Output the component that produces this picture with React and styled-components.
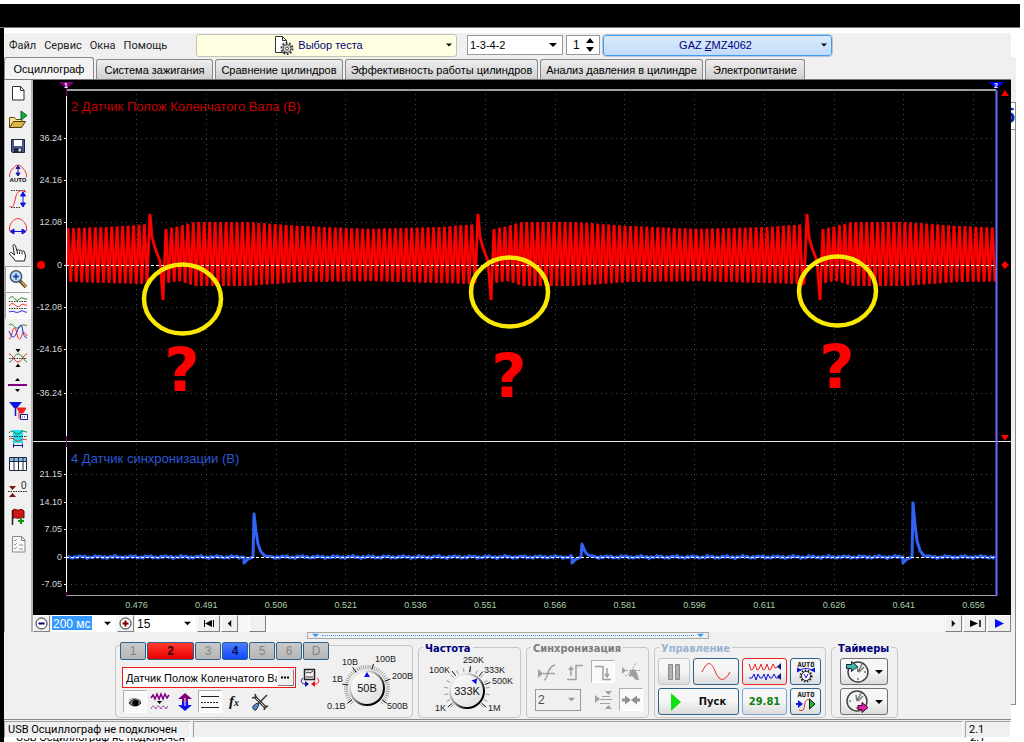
import React from "react";
import styled, { createGlobalStyle, css } from "styled-components";

const GlobalStyle = createGlobalStyle`
  * {
    box-sizing: border-box;
  }
  body {
    margin: 0;
    background: #fff;
    color: #000;
    font-family: "Liberation Sans", Arial, sans-serif;
    font-size: 11px;
  }
  button, input, select {
    font-family: inherit;
    font-size: inherit;
    color: inherit;
    margin: 0;
    padding: 0;
  }
  svg {
    display: block;
    flex: none;
  }
`;

const frame = `Roboto, "Liberation Sans", sans-serif`;
const heavy = `"DejaVu Sans Condensed", "DejaVu Sans", sans-serif`;

/* window frame */

const Page = styled.div`
  min-height: 100vh;
  display: flex;
  flex-direction: column;
  padding-top: 4px;
`;
const TitleBar = styled.header`
  height: 24px;
  margin-right: 4px;
  background: #000;
  border-bottom: 1px solid #777;
`;
const Columns = styled.div`
  flex: 1;
  display: flex;
  border-left: 4px solid #000;
`;
const Window = styled.div`
  flex: 1;
  min-width: 0;
  padding-top: 5px;
`;
const BackWindow = styled.div`
  width: 13px;
  padding-top: 29px;
  padding-bottom: 37px;
  display: flex;
  flex-direction: column;
  align-items: flex-start;
`;
const BackTop = styled.div`
  width: 5px;
  height: 45px;
  background: #f0f0f0;
`;
const BackValue = styled.div`
  width: 5px;
  height: 28px;
  overflow: hidden;
  border: 1px solid #8c8c8c;
  border-left: 0;
  display: flex;
  justify-content: flex-end;
  align-items: center;
  color: #0a1e96;
  font-size: 22px;
  font-weight: bold;
`;
const BackEdge = styled.div`
  width: 5px;
  flex: 1;
  background: #f0f0f0;
  border-right: 1px solid #8c8c8c;
  border-bottom: 1px solid #8c8c8c;
`;

/* toolbar */

const Toolbar = styled.div`
  height: 24px;
  display: flex;
  align-items: center;
  background: #f0f0f0;
`;
const Menu = styled.nav`
  width: 192px;
  padding-left: 5px;
  display: flex;
  gap: 8px;
  font-family: ${frame};
`;
const MenuItem = styled.a`
  color: #222;
  text-decoration: none;
`;
const TestButton = styled.button`
  width: 261px;
  height: 23px;
  margin-right: 10px;
  padding: 0 4px 0 12px;
  display: grid;
  grid-template-columns: 1fr auto 1fr;
  align-items: center;
  gap: 4px;
  border: 1px solid #c4c4b0;
  border-radius: 3px;
  background: #ffffe1;
  color: #00007b;
`;
const ModelButton = styled(TestButton)`
  width: 229px;
  height: 21px;
  margin: 0 0 0 3px;
  padding: 0 4px 0 0;
  border: 1px solid #3c9cf0;
  outline: 1px solid #b8c8d8;
  background: linear-gradient(#dcebfc, #c1dbfc);
`;
const AtEnd = styled.span`
  justify-self: end;
`;
const ComboBox = styled.div`
  width: ${p => p.$width}px;
  height: ${p => p.$height || 20}px;
  display: grid;
  align-items: center;
  border: ${p => (p.$flat ? 0 : 1)}px solid #9a9a9a;
  background: ${p => p.$back || "#fff"};
  & > * {
    grid-area: 1 / 1;
  }
  & > svg {
    justify-self: end;
    margin-right: 5px;
    pointer-events: none;
  }
`;
const Select = styled.select`
  width: 100%;
  height: 100%;
  padding-left: 2px;
  border: 0;
  appearance: none;
  background: transparent;
  ${p =>
    p.$selected &&
    css`
      color: #fff;
      background: linear-gradient(#3399ff, #3399ff) 1px 1px / 40px 14px
        no-repeat;
    `}
`;
const Spinner = styled.div`
  width: 34px;
  height: 20px;
  margin-left: 3px;
  padding: 0 5px 0 6px;
  display: flex;
  align-items: center;
  border: 1px solid #9a9a9a;
  background: #fff;
  font-size: 12px;
`;
const SpinnerInput = styled.input`
  flex: 1;
  min-width: 0;
  border: 0;
  background: none;
`;
const SpinnerArrows = styled.div`
  display: flex;
  flex-direction: column;
  gap: 4px;
`;
const SpinnerButton = styled.button`
  border: 0;
  background: none;
`;

/* tabs */

const Tabs = styled.div`
  height: 23px;
  display: flex;
  align-items: flex-end;
  gap: 2px;
  background: #f0f0f0;
  border-bottom: 1px solid #777;
`;
const Tab = styled.button`
  width: ${p => p.$width}px;
  height: ${p => (p.$active ? 22 : 20)}px;
  border: 1px solid #888;
  border-bottom: 0;
  border-radius: 3px 3px 0 0;
  background: ${p => (p.$active ? "#f4f4f4" : "linear-gradient(#eee, #cfcfcf)")};
  white-space: nowrap;
`;

/* left tools and scope */

const Body = styled.div`
  display: flex;
  background: #f0f0f0;
`;
const Tools = styled.div`
  width: 29px;
  padding-bottom: 75px;
  display: flex;
  flex-direction: column;
  border-left: 1px solid #aaa;
  border-right: 2px solid #b4b4b4;
`;
const Tool = styled.button`
  flex: 1;
  min-height: 0;
  display: flex;
  align-items: center;
  justify-content: center;
  border: 1px solid transparent;
  background: none;
  ${p =>
    p.$pressed &&
    css`
      background: #f9f9f9;
      border-color: #a0a0a0 #fff #fff #a0a0a0;
    `}
`;
const Main = styled.main`
  flex: 1;
  min-width: 0;
`;
const Scope = styled.svg`
  width: 100%;
  height: auto;
  background: #000;
`;

/* time line under the scope */

const TimeLine = styled.div`
  height: 17px;
  display: flex;
  gap: 1px;
  font-size: 12px;
`;
const RaisedButton = styled.button`
  width: ${p => p.$width}px;
  display: flex;
  align-items: center;
  justify-content: center;
  border: 1px solid;
  border-color: #fff #808080 #808080 #fff;
  background: #f0f0f0;
`;
const Track = styled.div`
  flex: 1;
  padding-left: 10px;
  display: flex;
  background: #f8f8f8;
`;
const Splitter = styled.div`
  width: 402px;
  height: 7px;
  margin-left: 303px;
  padding: 0 4px;
  display: flex;
  align-items: center;
  gap: 3px;
  border: 1px solid #a8a8a8;
`;
const Dots = styled.div`
  flex: 1;
  border-bottom: 1px dotted #3399ff;
`;

/* control groups */

const Lower = styled.div`
  background: #f0f0f0;
  border-bottom: 1px solid #888;
`;
const Groups = styled.div`
  padding: 2px 0 1px 111px;
  display: flex;
  align-items: flex-end;
  gap: 5px;
`;
const Group = styled.fieldset`
  width: ${p => p.$width}px;
  height: ${p => (p.$plain ? 73 : 77)}px;
  min-width: 0;
  margin: 0;
  padding: 0;
  border: 1px solid #c6c6c6;
  border-radius: 4px;
`;
const Legend = styled.legend`
  height: 13px;
  margin-left: 4px;
  padding: 0 2px;
  font-family: ${heavy};
  font-size: 11px;
  line-height: 15px;
  font-weight: bold;
  color: ${p => p.$color || "#00007b"};
`;
const ChannelLayout = styled.div`
  display: flex;
  align-items: flex-end;
`;
const ChannelColumn = styled.div`
  margin-top: -4px;
  padding-left: 4px;
`;
const Channels = styled.div`
  display: flex;
  gap: 1px;
`;
const channelLooks = {
  red: css`
    background: linear-gradient(#ff3a30, #e60000);
    color: #300;
    font-weight: bold;
  `,
  blue: css`
    background: linear-gradient(#4a7cff, #1448ff);
    color: #001050;
    font-weight: bold;
  `,
  off: css`
    background: linear-gradient(#c9c9c9, #b6b6b6);
    color: #858585;
  `
};
const Channel = styled.button`
  width: ${p => (p.$wide ? 47 : 26)}px;
  height: 18px;
  border: 1px solid #2c628b;
  border-radius: 2px;
  font-size: 12px;
  ${p => channelLooks[p.$look]}
`;
const NameRow = styled.div`
  margin-top: 7px;
  padding-left: 2px;
  display: flex;
  align-items: center;
  gap: 4px;
`;
const NameBox = styled.div`
  width: 174px;
  height: 21px;
  padding: 1px;
  display: flex;
  border: 1px solid #f01818;
  background: #fff;
`;
const NameInput = styled.input`
  flex: 1;
  min-width: 0;
  padding-left: 2px;
  border: 0;
  background: none;
`;
const IconRow = styled.div`
  margin-top: 2px;
  padding-left: 3px;
  display: flex;
  gap: 1px;
`;
const IconButton = styled.button`
  width: 24px;
  height: 23px;
  display: flex;
  align-items: center;
  justify-content: center;
  border: 1px solid transparent;
  background: none;
  ${p =>
    p.$pressed &&
    css`
      background: #f9f9f9;
      border-color: #b0b0b0 #fff #fff #b0b0b0;
    `}
`;
const SyncGrid = styled.div`
  padding: 5px 0 0 8px;
  display: grid;
  grid-template-columns: repeat(4, 24px);
  grid-auto-rows: 25px;
  align-items: center;
  gap: 3px 4px;
  font-size: 12px;
`;
const Wide = styled.div`
  grid-column: span 2;
`;
const ControlGrid = styled.div`
  padding: 4px 3px 0;
  display: grid;
  grid-template-columns: 32px 46px 45px 31px;
  grid-auto-rows: 27px;
  gap: 3px;
`;
const TimerStack = styled.div`
  padding: 4px 9px 0 8px;
  display: grid;
  grid-auto-rows: 27px;
  gap: 3px;
`;
const PushButton = styled.button`
  grid-column: span ${p => p.$span || 1};
  display: flex;
  align-items: center;
  justify-content: center;
  gap: ${p => p.$gap || 0}px;
  border: 1px solid ${p => p.$edge || "#2c628b"};
  border-radius: 3px;
  background: linear-gradient(#f6f6f6 45%, #dcdcdc);
  font-family: ${heavy};
  font-size: 11px;
  font-weight: bold;
  color: ${p => p.$color || "#111"};
`;

/* status line */

const StatusBar = styled.footer`
  height: 18px;
  padding-top: 1px;
  display: flex;
  gap: 2px;
  background: #f0f0f0;
  font-family: ${frame};
`;
const StatusCell = styled.div`
  width: ${p => p.$width || "auto"};
  flex: ${p => (p.$width ? "none" : 1)};
  padding-left: 3px;
  line-height: 16px;
  border: 1px solid;
  border-color: #a0a0a0 #fff #fff #a0a0a0;
  white-space: nowrap;
`;
const StatusEcho = styled.div`
  height: 4px;
  padding-left: 12px;
  overflow: hidden;
  display: flex;
  align-items: flex-end;
  justify-content: space-between;
  background: #fff;
  font-family: ${frame};
  line-height: 8px;
`;
const EchoVersion = styled.span`
  width: 41px;
`;

const Arrow = ({ color = "#000", dir = "down", size = 7 }) => {
  const turns = { down: 0, left: 90, up: 180, right: 270 };
  return (
    <svg width={size} height={size} viewBox="0 0 8 8">
      <path d="M0 2h8l-4 4z" fill={color} transform={`rotate(${turns[dir]} 4 4)`} />
    </svg>
  );
};

const Icon = ({ size = 20, w, h, children }) => (
  <svg
    width={w || size}
    height={h || size}
    viewBox={`0 0 ${w || 20} ${h || 20}`}
    fill="none"
  >
    {children}
  </svg>
);

const TOOLS = [
  {
    name: "Новый",
    art: <path d="M4.500 3.500h8l3.500 3.500v10h-11.500zM12.500 3.500v4h3.500" fill="#fff" stroke="#333" />
  },
  {
    name: "Открыть",
    art: (
      <>
        <path d="M1.500 17.500v-10h5l1.500 2h6v2" fill="#f5e58c" stroke="#5c4a10" />
        <path d="M1.500 17.500l4-6h12l-4 6z" fill="#dcb545" stroke="#4a3b08" />
        <path d="M13 1v9l6-4.500z" fill="#10b040" stroke="#066020" />
      </>
    )
  },
  {
    name: "Сохранить",
    art: (
      <>
        <path d="M3.500 3.500h13v13h-12l-1-1z" fill="#4a5a90" stroke="#1c2340" />
        <path d="M6 4h8v6h-8z" fill="#fff" />
        <path d="M6 12h8v4.500h-8z" fill="#222a40" />
        <path d="M10.500 12.500h2.500v3h-2.500z" fill="#ddd" />
      </>
    )
  },
  {
    name: "Авто",
    art: (
      <>
        <path d="M1.500 14c0-4 1-6 3-8s3-4 5.500-4 3.500 2 5.500 4 3 4 3 8" stroke="#f03030" />
        <path d="M10 4v7M8 5.500l2-3 2 3zM8 10l2 3 2-3z" stroke="#1a1a90" fill="#1a1a90" />
        <text x="10" y="19" fontSize="6" fontWeight="bold" textAnchor="middle" fill="#000">
          AUTO
        </text>
      </>
    )
  },
  {
    name: "Амплитуда",
    art: (
      <>
        <path d="M3 1.500h14M3 18.500h9" stroke="#333" strokeDasharray="1.500 1" />
        <path d="M1 17c2 2 4 1 5-2l2-8c1-4 4-6 7-5l3 1" stroke="#f03030" />
        <path d="M15 4v13M12.500 7l2.500-4 2.500 4zM12.500 14l2.500 4 2.500-4z" stroke="#1414e0" fill="#1414e0" />
      </>
    )
  },
  {
    name: "Развертка",
    art: (
      <>
        <path d="M1.500 15v-4c1-4 4-8 8.500-8.500 4.500.500 7.500 4.500 8.500 8.500v4" stroke="#f03030" />
        <path d="M3 15.500h14M6 13l-4 2.500 4 2.500zM14 13l4 2.500-4 2.500z" stroke="#1414e0" fill="#1414e0" />
      </>
    )
  },
  {
    name: "Рука",
    art: (
      <path
        d="M7.500 19l-3-4-3-3c0-1.500 1.500-2 2.500-1l2.500 2-1.500-9c0-2 2-2 2.500 0l1.500 5c0-2 2-2 2.500 0 .500-1.500 2-1 2.500.500.500-1 2-1 2.500.500l1 4c0 2-1 3-1 5zM9 9l.500 3M11.500 9.500v2.500M14 10v2.500"
        fill="#fff"
        stroke="#222"
      />
    )
  },
  {
    name: "Лупа",
    pressed: true,
    art: (
      <>
        <path d="M12 12l6 6" stroke="#5c4a28" strokeWidth="3.500" />
        <path d="M13.500 13l4.500 4.500" stroke="#e0b050" strokeWidth="1.500" />
        <circle cx="8" cy="7.500" r="5.700" fill="#b8dcf8" stroke="#44506c" strokeWidth="1.500" />
        <path d="M5 7.500h6M8 4.500v6" stroke="#14389c" strokeWidth="1.600" />
      </>
    )
  },
  {
    name: "Раздельно",
    pressed: true,
    art: (
      <>
        <path d="M1 4c2-3 4-3 6 0s4 0 6-1 4 2 6 1" stroke="#208020" />
        <path d="M1 6.500h18M1 13.500h18" stroke="#333" strokeDasharray="1.500 1" />
        <path d="M1 11c2-3 4-3 6-1s4 2 6 0 4 1 6 0" stroke="#f02020" />
        <path d="M1 17c2-1 4-1 6 0s4 0 6-1 4 2 6 1" stroke="#2020e0" />
      </>
    )
  },
  {
    name: "Совместно",
    art: (
      <>
        <path d="M1 3c2-2 4 0 6 2s4 1 6-1 4-1 6 0" stroke="#208020" />
        <path d="M1 17c3 0 3-11 5.500-11s2 11 5 11 2-13 7.500-3" stroke="#f02020" />
        <path d="M1 9c3 8 5 7 7 3s3-9 5-9 1 12 6 13" stroke="#2020e0" />
      </>
    )
  },
  {
    name: "Центр",
    art: (
      <>
        <path d="M1 14c4 0 5-8 9-8s5 6 9 8" stroke="#208020" />
        <path d="M1 6c4 0 5 8 9 8s5-7 9-8" stroke="#f02020" />
        <path d="M1 10.500h18" stroke="#333" strokeDasharray="1.500 1" />
        <path d="M7.500 1h5l-2.500 3.500zM7.500 19h5l-2.500-3.500z" fill="#000" />
      </>
    )
  },
  {
    name: "Граница",
    art: (
      <>
        <path d="M0 10h19" stroke="#800080" strokeWidth="2" />
        <path d="M7 6h5l-2.500-3zM7 14h5l-2.500 3z" fill="#000" />
      </>
    )
  },
  {
    name: "Маркеры",
    art: (
      <>
        <path d="M1 1h13l-5 6h-3z" fill="#1414e0" />
        <path d="M7.500 4v11" stroke="#1414e0" strokeWidth="1.500" />
        <path d="M9 7h9l-3 5h-3zM11 11v7" fill="#f02020" stroke="#f02020" />
        <path d="M12.500 13.500h7v5h-7z" fill="#fff" stroke="#1a1a90" />
        <path d="M14 16h4" stroke="#1a1a90" strokeDasharray="1 1" />
      </>
    )
  },
  {
    name: "Интервал",
    art: (
      <>
        <path d="M5 2h10v13h-10z" fill="#20e0f0" />
        <path d="M1 5c2-3 4-2 6 0s4 1 6-1 4 0 6 0" stroke="#107030" />
        <path d="M1 8.500h18" stroke="#222" strokeDasharray="1.500 1" />
        <path d="M1 11c2-1 4-1 6 1s4 1 6 0 4-1 6 0" stroke="#e03030" />
        <path d="M6 17.500h8M5.500 15.500v4M14.500 15.500v4" stroke="#141490" />
      </>
    )
  },
  {
    name: "Таблица",
    art: (
      <>
        <path d="M1.500 3.500h17v13h-17z" fill="#fff" stroke="#222a40" />
        <path d="M2 4h16v3h-16z" fill="#88b8e8" />
        <path d="M1 7.500h17M6 4v12M10.500 4v12M15 4v12" stroke="#222a40" />
      </>
    )
  },
  {
    name: "Ноль",
    art: (
      <>
        <path d="M1 5h7l-3.500 4zM1 16h7l-3.500-4z" fill="#801010" />
        <path d="M0 10.500h19" stroke="#222" strokeDasharray="1.500 1" />
        <text x="13" y="8" fontSize="10" fill="#222">
          0
        </text>
      </>
    )
  },
  {
    name: "Флаг",
    art: (
      <>
        <path d="M4.500 3v15" stroke="#222" strokeWidth="1.500" />
        <path d="M5 3c3-2 4 1 6 0s3-1 5 1v7c-2-1-3-1-5 0s-3-1-6 0z" fill="#d01818" stroke="#600" />
        <path d="M13 11v6M10 14h6" stroke="#109010" strokeWidth="2.200" />
      </>
    )
  },
  {
    name: "Список",
    art: (
      <>
        <path d="M4.500 2.500h9l3.500 3.500v12h-12.500zM13.500 2.500v4h3.500" fill="#f8f8f8" stroke="#888" />
        <path d="M6 6l1 1 2-2M6 10l1 1 2-2M6 14l1 1 2-2M11 11h4M11 15h4" stroke="#999" />
      </>
    )
  }
];

/* plot geometry */

const LEFT = 66;
const RIGHT = 996;
const SPIKES = [150, 478, 807];
const PERIOD = 5.46;

const TIMES = [
  "0.476", "0.491", "0.506", "0.521", "0.536", "0.551", "0.566",
  "0.581", "0.596", "0.611", "0.626", "0.641", "0.656"
];
const timeX = i => 136.5 + i * 69.75;

const LEVELS_1 = [
  ["36.24", 138], ["24.16", 180], ["12.08", 222], ["0", 265],
  ["-12.08", 307], ["-24.16", 349], ["-36.24", 393]
];
const LEVELS_2 = [
  ["21.15", 474], ["14.10", 502], ["7.05", 529], ["0", 557], ["-7.05", 584]
];

// distance from the last missing tooth -> top and bottom of the wave
const ENVELOPE = [
  [16, 229, 283], [30, 226, 281], [45, 222, 286], [95, 222, 286],
  [150, 226, 282], [220, 229, 281], [290, 227, 283], [329, 224, 284]
];

const envelope = t => {
  let i = 1;
  while (i < ENVELOPE.length - 1 && ENVELOPE[i][0] < t) i++;
  const [t0, top0, low0] = ENVELOPE[i - 1];
  const [t1, top1, low1] = ENVELOPE[i];
  const k = Math.max(0, Math.min(1, (t - t0) / (t1 - t0)));
  return [top0 + (top1 - top0) * k, low0 + (low1 - low0) * k];
};

const crankPath = () => {
  const points = ["M67 266"];
  let x = 68;
  let up = true;
  let next = 0;
  while (x < RIGHT - 1) {
    const spike = SPIKES[next];
    if (spike && x > spike - 4) {
      points.push(
        `L${spike - 3} 283L${spike} 214L${spike + 2} 237L${spike + 5} 248L${spike + 10} 261L${spike + 13} 300L${spike + 14} 273`
      );
      x = spike + 16;
      up = true;
      next++;
    }
    const last = next ? SPIKES[next - 1] : SPIKES[0] - 329;
    const [top, low] = envelope(x - last);
    points.push(`L${x.toFixed(1)} ${(up ? top : low).toFixed(1)}`);
    up = !up;
    x += PERIOD / 2;
  }
  return points.join("");
};

const CAM_PULSES = [[254, 514], [582, 544], [913, 503]];

const camPath = () => {
  const points = [];
  for (let x = LEFT + 1; x < RIGHT; x += 2) {
    const inPulse = CAM_PULSES.some(([p]) => x > p - 11 && x < p + 16);
    const noise = Math.sin(x * 1.9) + Math.sin(x * 0.37) * 0.6;
    if (!inPulse) points.push(`${x} ${(557 + noise).toFixed(1)}`);
    const pulse = CAM_PULSES.find(([p]) => x >= p + 14 && x < p + 16);
    if (pulse) {
      const [p, top] = pulse;
      const h = 557 - top;
      points.push(
        `${p - 10} 557`, `${p - 10} 563`, `${p - 6} 559`, `${p - 1} 557`,
        `${p} ${top}`, `${p + 2} ${557 - h * 0.6}`, `${p + 4} ${557 - h * 0.3}`,
        `${p + 7} ${557 - h * 0.12}`, `${p + 11} 556`
      );
    }
  }
  return "M" + points.join("L");
};

const MARKS = [
  { x: 182, y: 299, text: 391 },
  { x: 509, y: 292, text: 397 },
  { x: 837, y: 291, text: 388 }
];

const Oscillogram = () => (
  <Scope viewBox="33 80 978 535" fill="none" role="img" aria-label="Осциллограф">
    <g stroke="#4c4c4c" strokeDasharray="1 4">
      {TIMES.map((t, i) => (
        <path key={t} d={`M${Math.floor(timeX(i)) + 0.5} 94V595`} />
      ))}
      {[...LEVELS_1, ...LEVELS_2].map(([, y]) => (
        <path key={y} d={`M${LEFT} ${y + 0.5}H${RIGHT}`} />
      ))}
    </g>
    <path d={crankPath()} stroke="#a00" strokeWidth="3" />
    <path d={crankPath()} stroke="#f00" strokeWidth="2.300" />
    <path d={camPath()} stroke="#2f62f5" strokeWidth="3" strokeLinejoin="round" />
    {[265.5, 557.5].map(y => (
      <path key={y} d={`M${LEFT} ${y}H${RIGHT}`} stroke="#fff" strokeDasharray="3 2" />
    ))}
    <path d={`M${LEFT} 90H${RIGHT}`} stroke="#a0a0a0" strokeWidth="2" />
    <path d={`M${LEFT} 595.500H${RIGHT}`} stroke="#a0a0a0" />
    <path d="M33 441.500H1011" stroke="#e8e8e8" />
    <path d={`M${LEFT + 0.5} 90V596`} stroke="#fff" />
    <path d="M66.500 82V96M66.500 436V447M66.500 592V597" stroke="#800080" />
    <path d={`M${RIGHT + 0.5} 90V596`} stroke="#6a6aff" strokeWidth="2" />
    <path d="M59 82h15l-7.500 7z" fill="#800080" />
    <path d="M989 82h15l-7.500 7z" fill="#0000ff" />
    <path d="M1001 96h8l-4-6zM1001 435h8l-4 6zM1001 265l4-4 4 4-4 4z" fill="#f00" />
    <circle cx="41" cy="265" r="4" fill="#f00" />
    <g fontSize="9" fill="#d8d8d8" textAnchor="end">
      {[...LEVELS_1, ...LEVELS_2].map(([label, y]) => (
        <React.Fragment key={y}>
          <text x="62" y={y + 3}>
            {label}
          </text>
          <path d={`M64 ${y + 0.5}h3`} stroke="#fff" />
        </React.Fragment>
      ))}
    </g>
    <g fontSize="9" fill="#a8cfa8" textAnchor="middle">
      {TIMES.map((t, i) => (
        <text key={t} x={timeX(i)} y="608">
          {t}
        </text>
      ))}
    </g>
    <g fontSize="7" fontWeight="bold" fill="#fff" textAnchor="middle">
      <text x="66" y="88">1</text>
      <text x="996" y="88">2</text>
    </g>
    <g fontSize="13">
      <text x="71" y="111" fill="#c80000">
        2 Датчик Полож Коленчатого Вала (В)
      </text>
      <text x="71" y="463" fill="#2b57d8">
        4 Датчик синхронизации (В)
      </text>
    </g>
    {MARKS.map(m => (
      <g key={m.x}>
        <ellipse cx={m.x + 0.5} cy={m.y} rx="38.500" ry="34.500" stroke="#fae800" strokeWidth="4.500" />
        <text
          x={m.x}
          y={m.text}
          fontFamily="DejaVu Sans"
          fontSize="61"
          fontWeight="bold"
          textAnchor="middle"
          fill="#f00"
        >
          ?
        </text>
      </g>
    ))}
  </Scope>
);

const polar = (cx, cy, r, deg) => {
  const a = (deg * Math.PI) / 180;
  return `${(cx + r * Math.sin(a)).toFixed(1)} ${(cy - r * Math.cos(a)).toFixed(1)}`;
};

const Dial = ({ width, cx, value, angle, step, majors, labels }) => {
  const cy = 37;
  const ticks = [];
  for (let d = -135; d <= 135; d += step) ticks.push(d);
  return (
    <svg width={width} height="62" overflow="visible" fill="none">
      <defs>
        <linearGradient id={`rim${value}`} x1="0" y1="0" x2="1" y2="1">
          <stop offset="0.2" stopColor="#e8e8e8" />
          <stop offset="0.5" stopColor="#888" />
          <stop offset="0.75" stopColor="#000" />
        </linearGradient>
        <linearGradient id={`cap${value}`} x1="0" y1="0" x2="1" y2="1">
          <stop offset="0" stopColor="#fff" />
          <stop offset="1" stopColor="#dcdcdc" />
        </linearGradient>
      </defs>
      <path
        d={ticks.map(d => `M${polar(cx, cy, 19, d)}L${polar(cx, cy, 23, d)}`).join("")}
        stroke="#999"
      />
      <path
        d={majors.map(d => `M${polar(cx, cy, 19, d)}L${polar(cx, cy, 25, d)}`).join("")}
        stroke="#111"
      />
      <circle cx={cx} cy={cy} r="17" fill={`url(#cap${value})`} stroke={`url(#rim${value})`} strokeWidth="2" />
      <g transform={`rotate(${angle} ${cx} ${cy})`}>
        <path d={`M${cx - 3} ${cy - 11}h6l-3-5z`} fill="#0a0af0" />
      </g>
      <text x={cx} y={cy + 4} fontSize="11" textAnchor="middle" fill="#111">
        {value}
      </text>
      <g fontSize="9" fill="#222">
        {labels.map(([label, x, y]) => (
          <text key={label} x={x} y={y}>
            {label}
          </text>
        ))}
      </g>
    </svg>
  );
};

const TABS = [
  ["Осциллограф", 90],
  ["Система зажигания", 117],
  ["Сравнение цилиндров", 128],
  ["Эффективность работы цилиндров", 193],
  ["Анализ давления в цилиндре", 163],
  ["Электропитание", 100]
];

const CHANNELS = [
  ["1", "off"], ["2", "red"], ["3", "off"], ["4", "blue"],
  ["5", "off"], ["6", "off"], ["D", "off"]
];

const ToolbarRow = () => (
  <Toolbar>
    <Menu>
      {["Файл", "Сервис", "Окна", "Помощь"].map(item => (
        <MenuItem key={item} href="#">
          {item}
        </MenuItem>
      ))}
    </Menu>
    <TestButton>
      <AtEnd>
        <Icon>
          <path d="M1.500 1.500h7l4 4v12h-11zM8.500 1.500v4h4" fill="#fff" stroke="#333" />
          <circle cx="13" cy="13.500" r="5.500" stroke="#444" strokeWidth="2" strokeDasharray="2 1.400" />
          <circle cx="13" cy="13.500" r="4" fill="#d8dcd0" stroke="#444" />
          <circle cx="13" cy="13.500" r="1.500" fill="#fff" stroke="#444" />
        </Icon>
      </AtEnd>
      Выбор теста
      <AtEnd>
        <Arrow size={6} />
      </AtEnd>
    </TestButton>
    <ComboBox $width={96}>
      <Select aria-label="Порядок работы цилиндров">
        <option>1-3-4-2</option>
      </Select>
      <Arrow size={8} />
    </ComboBox>
    <Spinner>
      <SpinnerInput aria-label="Цилиндр" defaultValue="1" />
      <SpinnerArrows>
        <SpinnerButton aria-label="Больше">
          <svg width="8" height="5"><path d="M0 5h8l-4-5z" /></svg>
        </SpinnerButton>
        <SpinnerButton aria-label="Меньше">
          <svg width="8" height="5"><path d="M0 0h8l-4 5z" /></svg>
        </SpinnerButton>
      </SpinnerArrows>
    </Spinner>
    <ModelButton>
      <span />
      <span>
        GAZ <u>Z</u>MZ4062
      </span>
      <AtEnd>
        <Arrow size={6} />
      </AtEnd>
    </ModelButton>
  </Toolbar>
);

const TimeLineRow = () => (
  <TimeLine>
    <RaisedButton $width={17} aria-label="Сжать">
      <Icon w={13} h={13}>
        <circle cx="6.500" cy="6.500" r="5.500" fill="#fff" stroke="#222" />
        <path d="M3.500 6.500h6" stroke="#00007b" strokeWidth="2" />
      </Icon>
    </RaisedButton>
    <ComboBox $width={65} $height={17} $flat>
      <Select $selected aria-label="Развертка">
        <option>200  мс</option>
      </Select>
      <Arrow size={7} />
    </ComboBox>
    <RaisedButton $width={17} aria-label="Растянуть">
      <Icon w={13} h={13}>
        <circle cx="6.500" cy="6.500" r="5.500" fill="#fff" stroke="#222" />
        <path d="M3.500 6.500h6M6.500 3.500v6" stroke="#800000" strokeWidth="2" />
      </Icon>
    </RaisedButton>
    <ComboBox $width={61} $height={17} $flat>
      <Select aria-label="Масштаб">
        <option>15</option>
      </Select>
      <Arrow size={7} />
    </ComboBox>
    <RaisedButton $width={23} aria-label="В начало">
      <Icon w={12} h={9}>
        <path d="M1.500 1v7M10.500 1v7" stroke="#000" />
        <path d="M2 4.500l7-3.500v7z" fill="#000" />
      </Icon>
    </RaisedButton>
    <RaisedButton $width={17} aria-label="Назад">
      <Arrow dir="left" />
    </RaisedButton>
    <Track>
      <RaisedButton $width={17} aria-label="Положение" />
    </Track>
    <RaisedButton $width={17} aria-label="Вперед">
      <Arrow dir="right" />
    </RaisedButton>
    <RaisedButton $width={23} aria-label="В конец">
      <Icon w={12} h={9}>
        <path d="M11 1v7" stroke="#000" strokeWidth="1.500" />
        <path d="M1 1l8 3.500-8 3.500z" fill="#000" />
      </Icon>
    </RaisedButton>
    <RaisedButton $width={24} aria-label="Воспроизвести">
      <Icon w={9} h={9}>
        <path d="M0 0l9 4.500-9 4.500z" fill="#0a0aff" />
      </Icon>
    </RaisedButton>
  </TimeLine>
);

const ChannelGroup = () => (
  <Group $width={298} $plain>
    <ChannelLayout>
      <ChannelColumn>
        <Channels>
          {CHANNELS.map(([name, look]) => (
            <Channel key={name} $look={look} $wide={look === "red"}>
              {name}
            </Channel>
          ))}
        </Channels>
        <NameRow>
          <NameBox>
            <NameInput aria-label="Имя канала" defaultValue="Датчик Полож Коленчатого Вала" />
            <RaisedButton $width={17} aria-label="Выбрать">
              <Icon w={9} h={3}>
                <path d="M0 1.500h9" stroke="#000" strokeDasharray="2 1" strokeWidth="2" />
              </Icon>
            </RaisedButton>
          </NameBox>
          <Icon>
            <path d="M4.500 1.500h10v10h-10z" fill="#f4f4f4" stroke="#222" strokeWidth="1.500" />
            <path d="M6 5l2-1 2 1 3-2M6 9h7" stroke="#333" />
            <path d="M3 10c-3 2-2 6 2 6" stroke="#101090" />
            <path d="M5 13v6l4-3z" fill="#101090" />
            <path d="M17 10c3 2 2 6-2 6" stroke="#f01010" />
            <path d="M15 13v6l-4-3z" fill="#f01010" />
          </Icon>
        </NameRow>
        <IconRow>
          <IconButton $pressed aria-label="Показать">
            <Icon w={14} h={12}>
              <path d="M1 7c2-4 9-5 12 0-3 4-9 4-12 0z" fill="#776" stroke="#222" />
              <circle cx="7.500" cy="7" r="3" fill="#000" />
              <path d="M1 4c3-2 8-2 12 1" stroke="#777" />
            </Icon>
          </IconButton>
          <IconButton aria-label="Сигнал">
            <Icon>
              <path d="M1 6l2-3 2 4 2-5 2 5 2-5 2 5 2-5 2 4 2-3" stroke="#800080" strokeWidth="1.500" />
              <path d="M1 17c2-5 3-3 5 0 2-5 3-3 5 0 2-5 3-3 5 0l2-3" stroke="#a040a0" />
              <path d="M7 9h5l-2.500 3z" fill="#000" />
            </Icon>
          </IconButton>
          <IconButton aria-label="Смещение">
            <Icon>
              <path d="M10 1l7 6h-4v3h-6v-3h-4z" fill="#800080" />
              <path d="M10 19l7-6h-4v-3h-6v3h-4z" fill="#1010f0" />
              <path d="M10 6v8" stroke="#fff" />
            </Icon>
          </IconButton>
          <IconButton $pressed aria-label="Уровни">
            <Icon w={18} h={14}>
              <path d="M0 1.500h18M0 12.500h18" stroke="#222" />
              <path d="M0 7.500h18" stroke="#222" strokeDasharray="2 1" />
            </Icon>
          </IconButton>
          <IconButton aria-label="Функция">
            <Icon w={18} h={16}>
              <text x="3" y="12" fontFamily="Liberation Serif" fontSize="15" fontStyle="italic" fontWeight="bold" fill="#111">
                f
              </text>
              <text x="8" y="12" fontFamily="Liberation Serif" fontSize="10" fontStyle="italic" fontWeight="bold" fill="#111">
                x
              </text>
            </Icon>
          </IconButton>
          <IconButton aria-label="Настройка">
            <Icon w={18} h={18}>
              <path d="M4 4l11 11" stroke="#333" strokeWidth="3" />
              <path d="M4.500 4.500l10 10" stroke="#ddd" />
              <path d="M4 1l1 3-4 1M13 17l1-3 3-1" stroke="#333" strokeWidth="1.500" />
              <path d="M16 2l-9 9" stroke="#333" strokeWidth="1.500" />
              <path d="M2 13l4-3 2 2-3 5c-2 1-4-2-3-4z" fill="#5888c8" stroke="#234" />
            </Icon>
          </IconButton>
        </IconRow>
      </ChannelColumn>
      <Dial
        width={85}
        cx={38}
        value="50В"
        angle={0}
        step={6}
        majors={[-128, -81, -35, 15, 69, 128]}
        labels={[
          ["0.1В", -2, 58], ["1В", 3, 31], ["10В", 13, 14],
          ["100В", 46, 11], ["200В", 63, 28], ["500В", 58, 58]
        ]}
      />
    </ChannelLayout>
  </Group>
);

const SYNC_ICONS = [
  <>
    <path d="M1 7v9l5-4.500z" fill="#a0a0a0" />
    <path d="M6 11.500h12M7 18c4 0 3-14 11-15" stroke="#a0a0a0" strokeWidth="1.500" />
  </>,
  <path d="M2 17.500h9v-14h7M6 14v-8M4 8l2-3 2 3" stroke="#a0a0a0" strokeWidth="1.500" />,
  <path d="M2 4.500h8v13h8M14 6v8M12 12l2 3 2-3" stroke="#a0a0a0" strokeWidth="1.500" />,
  <>
    <path d="M1 5v7l4-3.500z" fill="#a0a0a0" />
    <path d="M5 8.500h14M4 14c4 0 8-8 11-13" stroke="#a0a0a0" strokeDasharray="2 1" />
    <path d="M9 9l4-2 3 4 2 7h-3l-4-4-3 1z" fill="#a0a0a0" />
  </>
];

const SyncGroup = () => (
  <Group $width={123}>
    <Legend $color="#7c7c7c">Синхронизация</Legend>
    <SyncGrid>
      {SYNC_ICONS.map((art, i) => (
        <IconButton key={i} disabled $pressed={i === 2} aria-label={`Режим ${i + 1}`}>
          <Icon>{art}</Icon>
        </IconButton>
      ))}
      <Wide>
        <ComboBox $width={46} $height={22} $back="#f0f0f0">
          <Select disabled aria-label="Канал синхронизации">
            <option>2</option>
          </Select>
          <Arrow color="#999" />
        </ComboBox>
      </Wide>
      <IconButton disabled aria-label="Уровень">
        <Icon>
          <path d="M2 5v8l5-4zM12 1h7l-3.500 4zM12 19h7l-3.500-4z" fill="#a0a0a0" />
          <path d="M7 9.500h12M9 6.500h8M7 13.500h10" stroke="#a0a0a0" />
        </Icon>
      </IconButton>
      <IconButton disabled $pressed aria-label="Центр">
        <Icon>
          <path d="M1 10h5M14 10h5" stroke="#909090" strokeWidth="3" />
          <path d="M4 5.500l6 4.500-6 4.500zM16 5.500l-6 4.500 6 4.500z" fill="#909090" />
        </Icon>
      </IconButton>
    </SyncGrid>
  </Group>
);

const AutoText = () => (
  <text x="11" y="7" fontFamily="DejaVu Sans Mono" fontSize="7" fontWeight="bold" textAnchor="middle" fill="#111">
    AUTO
  </text>
);

const ControlGroup = () => (
  <Group $width={172}>
    <Legend $color="#9ab4d0">Управление</Legend>
    <ControlGrid>
      <PushButton disabled $edge="#c4c4c4" aria-label="Пауза">
        <Icon w={12} h={16}>
          <path d="M.500.500h4v15h-4zM7.500.500h4v15h-4z" fill="#b0b0b0" stroke="#8a8a8a" />
        </Icon>
      </PushButton>
      <PushButton aria-label="Один кадр">
        <Icon w={30} h={20}>
          <path d="M1 10c5-11 9-11 13-1s9 12 15 1" stroke="#f02020" />
        </Icon>
      </PushButton>
      <PushButton $edge="#f02020" aria-label="Непрерывно">
        <Icon w={34} h={20}>
          <path d="M1 2l2 6 2-1 2-5 2 6 2-1 2-5 2 6 2-1 2-5 2 6 2-1 2-5 2 4 3-1" stroke="#f02020" />
          <path d="M1 16h3l2-4 2 6 2-6 2 4h2l2-4 2 6 2-6 2 4h2l2-4 2 4h3" stroke="#1414e0" />
          <path d="M33 1v7l-4-3.500zM33 11v7l-4-3.500z" fill="#141490" />
        </Icon>
      </PushButton>
      <PushButton aria-label="Авто масштаб">
        <Icon w={22} h={23}>
          <AutoText />
          <path d="M5 10c3-2 9-2 12 0" stroke="#1414e0" />
          <path d="M2 7.500v5l5-2.500zM20 7.500v5l-5-2.500z" fill="#1414e0" />
          <circle cx="11" cy="16" r="5.500" stroke="#222" strokeWidth="2" strokeDasharray="1.500 1.500" />
          <circle cx="11" cy="16" r="4.500" fill="#fff" stroke="#222" />
          <path d="M9 14l2 4 2-4" stroke="#1414e0" />
        </Icon>
      </PushButton>
      <PushButton $span={2} $gap={18}>
        <Icon w={10} h={18}>
          <path d="M0 0l10 9-10 9z" fill="#10e010" />
        </Icon>
        Пуск
      </PushButton>
      <PushButton $edge="#78a8dc" $color="#108010">
        29.81
      </PushButton>
      <PushButton aria-label="Авто пуск">
        <Icon w={22} h={23}>
          <AutoText />
          <path d="M1 14h4" stroke="#1414e0" strokeWidth="2" />
          <path d="M3 10l5 4-5 4z" fill="#1414e0" />
          <path d="M4 20c6 2 5-3 6-7s4-5 6 0" stroke="#c03030" />
          <path d="M14.500 9v10l5.500-5z" fill="#10c030" stroke="#111" />
        </Icon>
      </PushButton>
    </ControlGrid>
  </Group>
);

const TimerGroup = () => (
  <Group $width={67}>
    <Legend>Таймеры</Legend>
    <TimerStack>
      <PushButton $edge="#707070" $gap={6} aria-label="Таймер пуска">
        <Icon w={23} h={23}>
          <circle cx="12" cy="12" r="10" fill="#f4f4f4" stroke="#444" strokeWidth="1.500" />
          <path d="M12 12l4-8M12 12l-1-6M13 12l5-5M12 20v-2M20 12h-2" stroke="#777" strokeWidth="1.500" />
          <path d="M.500 4.500h5v-3l6 5-6 5v-3h-5z" fill="#40b8a0" stroke="#124" />
        </Icon>
        <Arrow size={8} />
      </PushButton>
      <PushButton $edge="#707070" $gap={6} aria-label="Таймер остановки">
        <Icon w={23} h={23}>
          <circle cx="11" cy="11" r="10" fill="#f4f4f4" stroke="#444" strokeWidth="1.500" />
          <path d="M11 11l4-8M11 11l-1-6M12 11l5-5M3 11h2M11 19v-2" stroke="#777" strokeWidth="1.500" />
          <path d="M12 15.500h4v-3l6 5-6 5v-3h-4z" fill="#e020b0" stroke="#402" />
        </Icon>
        <Arrow size={8} />
      </PushButton>
    </TimerStack>
  </Group>
);

const App = () => (
  <Page>
    <GlobalStyle />
    <TitleBar />
    <Columns>
      <Window>
        <ToolbarRow />
        <Tabs role="tablist">
          {TABS.map(([name, width], i) => (
            <Tab key={name} role="tab" aria-selected={i === 0} $active={i === 0} $width={width}>
              {name}
            </Tab>
          ))}
        </Tabs>
        <Body>
          <Tools>
            {TOOLS.map(tool => (
              <Tool key={tool.name} $pressed={tool.pressed} aria-label={tool.name}>
                <Icon>{tool.art}</Icon>
              </Tool>
            ))}
          </Tools>
          <Main>
            <Oscillogram />
            <TimeLineRow />
          </Main>
        </Body>
        <Lower>
          <Splitter>
            <Arrow color="#3399ff" />
            <Dots />
            <Arrow color="#3399ff" />
          </Splitter>
          <Groups>
            <ChannelGroup />
            <Group $width={103}>
              <Legend>Частота</Legend>
              <Dial
                width={101}
                cx={48}
                value="333K"
                angle={39}
                step={18}
                majors={[-130, -37, 8, 39, 70, 130]}
                labels={[
                  ["1K", 16, 57], ["100K", 10, 19], ["250K", 44, 9],
                  ["333K", 65, 19], ["500K", 73, 30], ["1M", 69, 57]
                ]}
              />
            </Group>
            <SyncGroup />
            <ControlGroup />
            <TimerGroup />
          </Groups>
        </Lower>
        <StatusBar>
          <StatusCell $width="187px">USB Осциллограф не подключен</StatusCell>
          <StatusCell />
          <StatusCell $width="46px">2.1</StatusCell>
        </StatusBar>
        <StatusEcho aria-hidden="true">
          <span>USB Осциллограф не подключен</span>
          <EchoVersion>2.1</EchoVersion>
        </StatusEcho>
      </Window>
      <BackWindow aria-hidden="true">
        <BackTop />
        <BackValue>5</BackValue>
        <BackEdge />
      </BackWindow>
    </Columns>
  </Page>
);

export default App;
